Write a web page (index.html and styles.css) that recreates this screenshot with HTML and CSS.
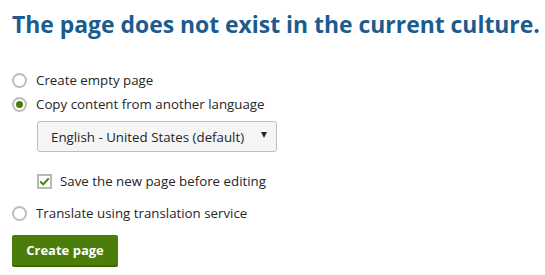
FILE: index.html
```html
<!DOCTYPE html>
<html>
<head>
<meta charset="utf-8">
<link rel="stylesheet" href="styles.css">
</head>
<body>
<div class="page">
  <h1 class="title">The page does not exist in the current culture.</h1>
  <div class="options">
    <label class="radio-row">
      <span class="radio"></span>
      <span class="label">Create empty page</span>
    </label>
    <label class="radio-row">
      <span class="radio checked"></span>
      <span class="label">Copy content from another language</span>
    </label>
    <div class="sub">
      <div class="select">
        <span class="select-text">English - United States (default)</span>
        <span class="caret"></span>
      </div>
      <label class="check-row">
        <span class="checkbox">
          <svg width="11" height="9" viewBox="0 0 11 9"><path d="M1.2 4.6 L4.2 7.4 L9.8 1.4" fill="none" stroke="#4a7d0a" stroke-width="2"/></svg>
        </span>
        <span class="label">Save the new page before editing</span>
      </label>
    </div>
    <label class="radio-row">
      <span class="radio"></span>
      <span class="label">Translate using translation service</span>
    </label>
  </div>
  <button class="btn">Create page</button>
</div>
</body>
</html>
```
FILE: styles.css
```css
html, body {
  margin: 0;
  padding: 0;
  background: #fff;
}
body {
  font-family: "Open Sans", "Noto Sans", sans-serif;
  color: #262626;
}
.page {
  padding: 10px 0 0 12px;
}
.title {
  margin: 0;
  font-size: 22.9px;
  font-weight: 700;
  color: #1a5c8e;
  line-height: 30px;
  white-space: nowrap;
}
.options {
  margin-top: 28px;
  display: flex;
  flex-direction: column;
}
.radio-row, .check-row {
  display: flex;
  align-items: center;
  height: 24px;
  font-size: 13.3px;
}
.radio {
  width: 15px;
  height: 15px;
  box-sizing: border-box;
  border: 2px solid #bdbdbd;
  border-radius: 50%;
  margin-right: 9px;
  display: flex;
  align-items: center;
  justify-content: center;
  flex: none;
}
.radio.checked::after {
  content: "";
  width: 7px;
  height: 7px;
  border-radius: 50%;
  background: #4a7d0a;
}
.sub {
  padding-left: 25px;
  display: flex;
  flex-direction: column;
}
.select {
  margin-top: 5px;
  width: 240px;
  height: 31px;
  box-sizing: border-box;
  border: 1px solid #bfbfbf;
  border-radius: 3px;
  background: #f5f5f5;
  display: flex;
  align-items: center;
  justify-content: space-between;
  padding: 0 9px 0 13px;
  font-size: 13.3px;
}
.caret {
  width: 0;
  height: 0;
  border-left: 3px solid transparent;
  border-right: 3px solid transparent;
  border-top: 6px solid #262626;
  margin-top: -3px;
}
.check-row {
  margin-top: 17px;
  height: 24px;
}
.checkbox {
  width: 15px;
  height: 15px;
  box-sizing: border-box;
  border: 2px solid #b8b8b8;
  margin-right: 8px;
  display: flex;
  align-items: center;
  justify-content: center;
  flex: none;
}
.sub + .radio-row {
  margin-top: 8px;
}
.btn {
  margin-top: 10px;
  width: 106px;
  height: 32px;
  border: none;
  border-bottom: 2px solid #3b6604;
  border-radius: 2px;
  background: #4a7d0a;
  color: #fff;
  font-family: "Open Sans", "Noto Sans", sans-serif;
  font-weight: 700;
  font-size: 13px;
  padding: 0;
}
```
